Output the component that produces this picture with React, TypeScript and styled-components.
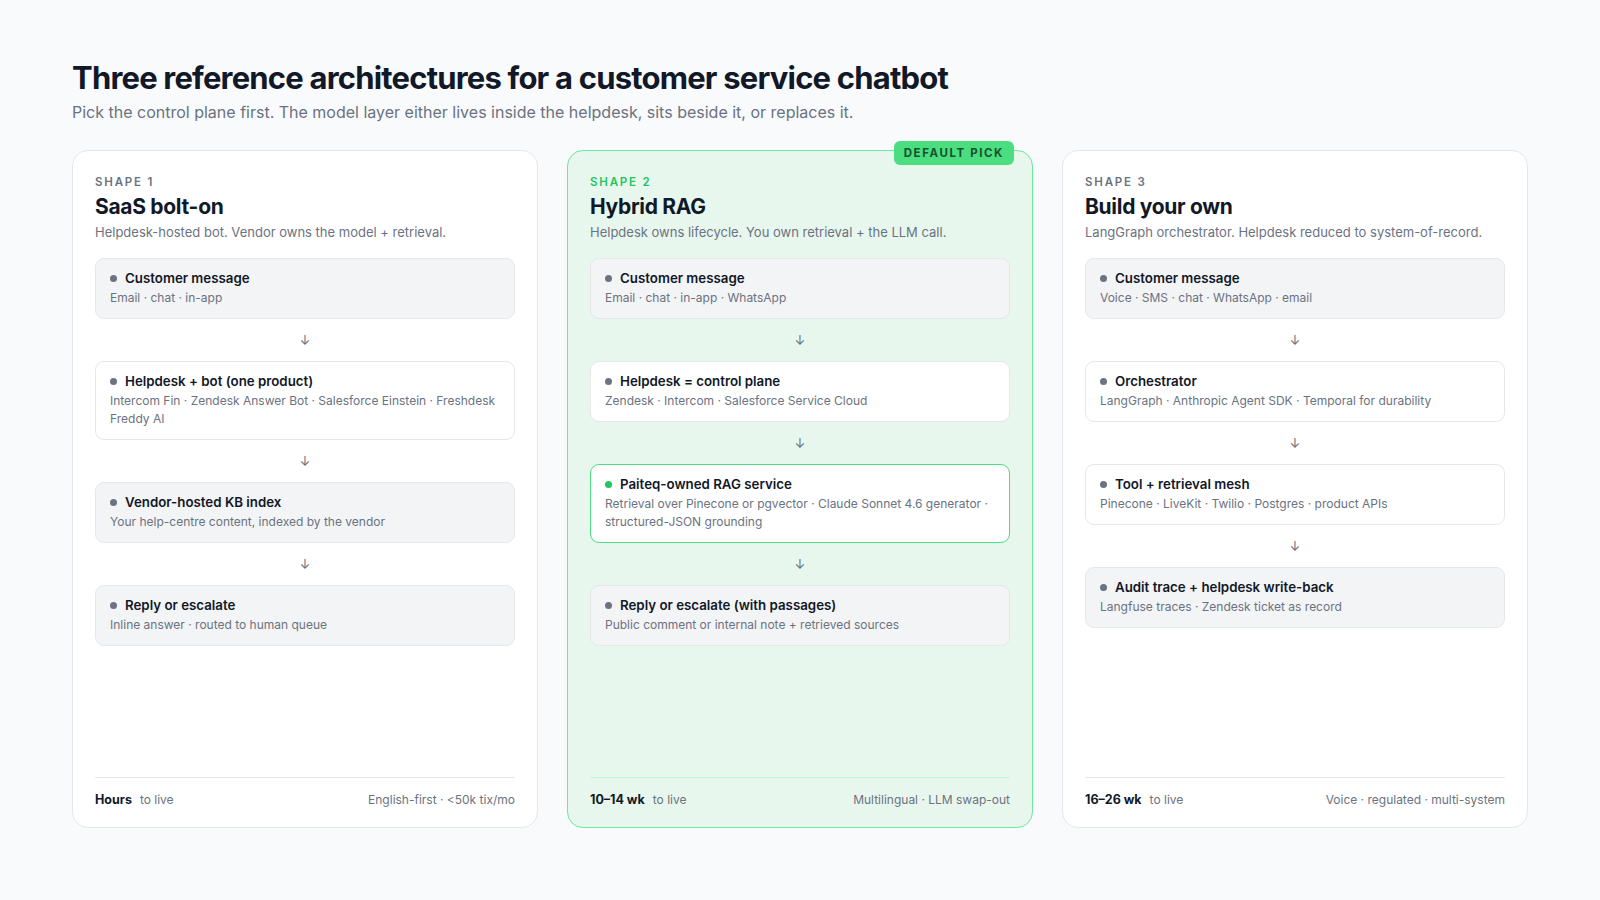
import React from "react";
import styled, { createGlobalStyle } from "styled-components";

const Global = createGlobalStyle`
  html, body { margin: 0; padding: 0; background: #f9fafb; }
  body { font-family: Inter, "Noto Sans", sans-serif; color: #111827; }
`;

const Page = styled.div`
  width: 1600px; height: 900px; box-sizing: border-box;
  padding: 56px 72px 0 72px;
`;
const Title = styled.h1`
  margin: 0; font-size: 31px; font-weight: 700; letter-spacing: -0.8px; color: #111827; line-height: 44px;
`;
const Sub = styled.p`
  margin: 2px 0 0; font-size: 16px; color: #6b7280;
`;
const Grid = styled.div`
  margin-top: 28px; display: grid; grid-template-columns: repeat(3, 466px); gap: 29px;
`;
const Card = styled.div<{ $hl?: boolean }>`
  position: relative; height: 678px; box-sizing: border-box;
  border-radius: 16px; padding: 24px 22px 20px;
  background: ${p => (p.$hl ? "#e8f7ee" : "#ffffff")};
  border: 1px solid ${p => (p.$hl ? "#6ee7a0" : "#e5e7eb")};
  display: flex; flex-direction: column;
`;
const Badge = styled.div`
  position: absolute; top: -10px; right: 18px;
  background: #4ade80; color: #14532d; font-size: 11.5px; font-weight: 700; letter-spacing: 1.6px;
  padding: 5px 10px; border-radius: 6px;
`;
const Eyebrow = styled.div<{ $hl?: boolean }>`
  font-size: 11.5px; font-weight: 600; letter-spacing: 1.8px; color: ${p => (p.$hl ? "#22c55e" : "#6b7280")};
`;
const CardTitle = styled.div`
  font-size: 21px; font-weight: 700; letter-spacing: -0.3px; margin-top: 5px; color: #111827;
`;
const CardSub = styled.div`
  font-size: 13px; color: #6b7280; margin-top: 5px;
`;
const Flow = styled.div`
  margin-top: 18px; display: flex; flex-direction: column; flex: 1;
`;
const Step = styled.div<{ $kind: "gray" | "white" | "green" }>`
  border-radius: 9px; padding: 11px 14px; box-sizing: border-box;
  background: ${p => (p.$kind === "gray" ? "#f3f4f6" : "#ffffff")};
  border: ${p => (p.$kind === "green" ? "1.5px solid #4ade80" : "1px solid #e5e7eb")};
`;
const StepHead = styled.div`
  display: flex; align-items: center; gap: 8px; font-size: 13.3px; font-weight: 600; color: #111827;
`;
const Dot = styled.span<{ $green?: boolean }>`
  width: 7px; height: 7px; border-radius: 50%; background: ${p => (p.$green ? "#22c55e" : "#6b7280")};
`;
const StepText = styled.div`
  margin-top: 3px; font-size: 12px; color: #6b7280; line-height: 18px;
`;
const Arrow = styled.div`
  height: 42px; display: flex; align-items: center; justify-content: center; color: #6b7280; font-size: 13px;
`;
const Footer = styled.div<{ $hl?: boolean }>`
  border-top: 1px solid ${p => (p.$hl ? "#bbf7d0" : "#e5e7eb")};
  padding-top: 14px; display: flex; justify-content: space-between; align-items: center;
  font-size: 12px; color: #6b7280;
`;
const Strong = styled.b`
  color: #111827; font-weight: 700; margin-right: 8px; font-size: 12.5px;
`;

type S = { t: string; d: string; k: "gray" | "white" | "green" };
const cards: { e: string; t: string; s: string; hl?: boolean; steps: S[]; time: string; tags: string }[] = [
  {
    e: "SHAPE 1", t: "SaaS bolt-on", s: "Helpdesk-hosted bot. Vendor owns the model + retrieval.",
    steps: [
      { t: "Customer message", d: "Email · chat · in-app", k: "gray" },
      { t: "Helpdesk + bot (one product)", d: "Intercom Fin · Zendesk Answer Bot · Salesforce Einstein · Freshdesk Freddy AI", k: "white" },
      { t: "Vendor-hosted KB index", d: "Your help-centre content, indexed by the vendor", k: "gray" },
      { t: "Reply or escalate", d: "Inline answer · routed to human queue", k: "gray" },
    ],
    time: "Hours", tags: "English-first · <50k tix/mo",
  },
  {
    e: "SHAPE 2", t: "Hybrid RAG", s: "Helpdesk owns lifecycle. You own retrieval + the LLM call.", hl: true,
    steps: [
      { t: "Customer message", d: "Email · chat · in-app · WhatsApp", k: "gray" },
      { t: "Helpdesk = control plane", d: "Zendesk · Intercom · Salesforce Service Cloud", k: "white" },
      { t: "Paiteq-owned RAG service", d: "Retrieval over Pinecone or pgvector · Claude Sonnet 4.6 generator · structured-JSON grounding", k: "green" },
      { t: "Reply or escalate (with passages)", d: "Public comment or internal note + retrieved sources", k: "gray" },
    ],
    time: "10–14 wk", tags: "Multilingual · LLM swap-out",
  },
  {
    e: "SHAPE 3", t: "Build your own", s: "LangGraph orchestrator. Helpdesk reduced to system-of-record.",
    steps: [
      { t: "Customer message", d: "Voice · SMS · chat · WhatsApp · email", k: "gray" },
      { t: "Orchestrator", d: "LangGraph · Anthropic Agent SDK · Temporal for durability", k: "white" },
      { t: "Tool + retrieval mesh", d: "Pinecone · LiveKit · Twilio · Postgres · product APIs", k: "white" },
      { t: "Audit trace + helpdesk write-back", d: "Langfuse traces · Zendesk ticket as record", k: "gray" },
    ],
    time: "16–26 wk", tags: "Voice · regulated · multi-system",
  },
];

export default function App() {
  return (
    <Page>
      <Global />
      <Title>Three reference architectures for a customer service chatbot</Title>
      <Sub>Pick the control plane first. The model layer either lives inside the helpdesk, sits beside it, or replaces it.</Sub>
      <Grid>
        {cards.map(c => (
          <Card key={c.e} $hl={c.hl}>
            {c.hl && <Badge>DEFAULT PICK</Badge>}
            <Eyebrow $hl={c.hl}>{c.e}</Eyebrow>
            <CardTitle>{c.t}</CardTitle>
            <CardSub>{c.s}</CardSub>
            <Flow>
              {c.steps.map((s, i) => (
                <React.Fragment key={s.t}>
                  {i > 0 && <Arrow>↓</Arrow>}
                  <Step $kind={s.k}>
                    <StepHead><Dot $green={s.k === "green"} />{s.t}</StepHead>
                    <StepText>{s.d}</StepText>
                  </Step>
                </React.Fragment>
              ))}
            </Flow>
            <Footer $hl={c.hl}>
              <span><Strong>{c.time}</Strong>to live</span>
              <span>{c.tags}</span>
            </Footer>
          </Card>
        ))}
      </Grid>
    </Page>
  );
}
